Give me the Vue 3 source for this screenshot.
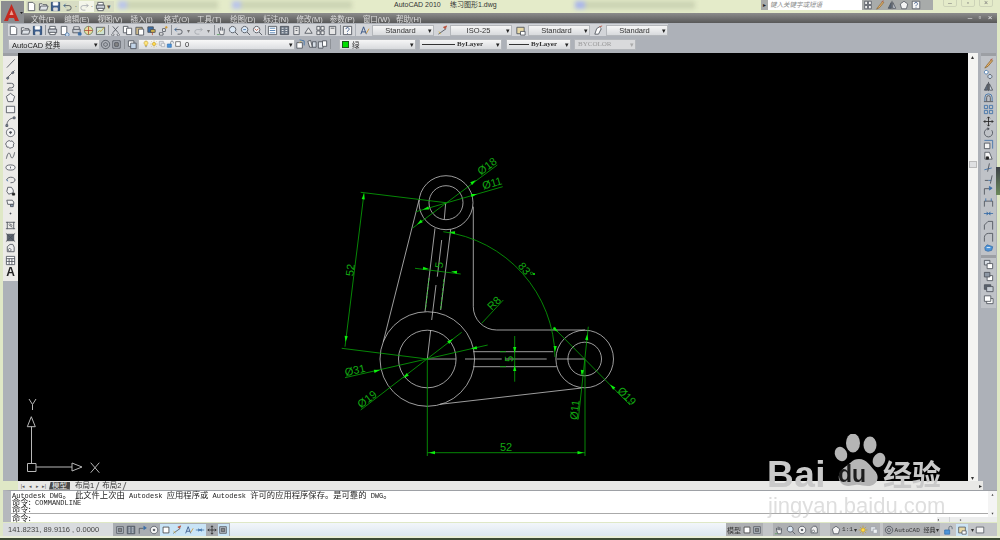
<script setup>
import { h } from 'vue'

const K = '#4a4f58'
const B = '#3a6ea8'
const Y = '#d9b94a'
const G = '#4f9a55'
const R = '#b8503c'

// 12x12 toolbar glyphs: [path, stroke, fill]
const icons = {
  new: [['M2.5 1.5h5l2 2v7h-7z', K, '#fff']],
  open: [['M1.5 10V3h3l1 1h4v1.5', K, '#f2f2f2'], ['M1.5 10l1.5-4.5h8L9.5 10z', K, '#dfe3e8']],
  save: [['M1.5 1.5h9v9h-9z', '#27456e', '#3e5f8e'], ['M3.5 1.5h5v3h-5z', '#fff', '#fff'], ['M4 7.5h4v3H4z', '#ddd', '#ddd']],
  print: [['M3 1.5h6v3H3z', K, '#fff'], ['M1.5 4.5h9v4h-9z', K, '#c9ced6'], ['M3 8h6v2.5H3z', K, '#fff']],
  preview: [['M2.5 1.5h6v9h-6z', K, '#fff'], ['M9 8.5a2 2 0 1 1-.1 0', B, '#cfe0f2']],
  publish: [['M2 4.5h8v4H2z', K, '#c9ced6'], ['M3 2h6v2.5H3z', K, '#fff'], ['M8 8.5h3v2.5H8z', B, B]],
  dwf: [['M6 1.5a4.5 4.5 0 1 0 .1 0', '#5a7d4f', '#e8dca0'], ['M6 1.5v9M1.5 6h9', R, 'none']],
  mark: [['M1.5 2.5h9v8h-9z', K, '#cfe3d0'], ['M3 8l2-2 1.5 1L10 2.5', '#c9a030', 'none']],
  cut: [['M3 1.5l6 7M9 1.5l-6 7', K, 'none'], ['M3 9.5a1.2 1.2 0 1 0 .1 0M9 9.5a1.2 1.2 0 1 0 .1 0', K, '#fff']],
  copy: [['M1.5 1.5h5v7h-5z', K, '#fff'], ['M5 3.5h5.5v7H5z', K, '#fff']],
  paste: [['M2 2.5h7v8H2z', K, '#cdb98a'], ['M5 4.5h5.5v6.5H5z', K, '#fff']],
  match: [['M2 2h6v6H2z', K, B], ['M5 5h5v3H5z', K, Y], ['M7 8v3', R, 'none']],
  block: [['M1.5 8.5h4v2.5h-4z', K, '#fff'], ['M5 4h3v3H5z', K, '#fff'], ['M9 1v3M7.5 2.5h3', '#d09020', 'none']],
  undo: [['M2 5h5.5a2.5 2.5 0 0 1 0 5H5', K, 'none'], ['M4 3L2 5l2 2', B, 'none']],
  redo: [['M10 5H4.5a2.5 2.5 0 0 0 0 5H7', '#a4a8ae', 'none'], ['M8 3l2 2-2 2', '#a4a8ae', 'none']],
  pan: [['M3 6V3.5M5 6V2M7 6V2.5M9 7V4M3 6l1.5 4.5h4L9 7', K, '#eee'], ['M1 10.5h3', G, 'none']],
  zoom: [['M5 1.5a3.5 3.5 0 1 0 .1 0', K, '#dbe8f5'], ['M7.5 7.5l3.5 3.5', K, 'none']],
  zoomw: [['M5 1.5a3.5 3.5 0 1 0 .1 0', K, '#dbe8f5'], ['M3.5 5h3', B, 'none'], ['M7.5 7.5l3.5 3.5', K, 'none']],
  zoomp: [['M5 1.5a3.5 3.5 0 1 0 .1 0', K, '#f0f3f6'], ['M3 4l2 2 2-2', R, 'none'], ['M7.5 7.5l3.5 3.5', K, 'none']],
  props: [['M1.5 1.5h9v9h-9z', K, '#fff'], ['M3 3.5h6M3 6h6M3 8.5h6', B, 'none']],
  center: [['M1.5 1.5h9v9h-9z', K, '#6d7886'], ['M3 3.5h2M7 3.5h2M3 6h2M7 6h2M3 8.5h2M7 8.5h2', '#fff', 'none']],
  palette: [['M3 1.5h6v9H3z', K, '#e6e6e6'], ['M5 3.5h2M5 6h2', K, 'none']],
  sheet: [['M2 9l4-6 4 6z', K, '#e6e6e6']],
  mkup: [['M2 1.5h3.5v4H2zM6.5 1.5H10v4H6.5zM2 6.5h3.5v4H2zM6.5 6.5H10v4H6.5z', K, '#eee']],
  calc: [['M2.5 1.5h7v9h-7z', K, '#e6e6e6'], ['M4 3.5h4', K, 'none']],
  help: [['M1.5 1.5h9v9h-9z', K, '#f6f6f6'], ['M4.3 4.5a1.7 1.7 0 1 1 2.5 1.5L6 6.8v.7M6 8.8v.8', '#26457a', 'none']],
  txt: [['M2 10L5 2l3 8M3 7.5h4', '#26457a', 'none'], ['M8 9l3-5', '#d09020', 'none']],
  dim: [['M1.5 10L10 4', K, 'none'], ['M7 2.5L10.5 1 9 4z', R, R], ['M2 7l2 3', Y, 'none']],
  tbl: [['M2 2.5h8v7H2z', K, '#e8d9a6'], ['M6 7h5v4H6z', K, '#fff']],
  mld: [['M2 10l2-6 3-2 2 2-3 6z', K, '#fff'], ['M7 2l3-1', R, 'none']],
  workspace: [['M6 1.5a4.5 4.5 0 1 0 .1 0', K, 'none'], ['M6 4a2 2 0 1 0 .1 0', K, 'none']],
  save2: [['M2 2h8v8H2z', K, '#bcc2ca'], ['M4 4h4v4H4z', K, '#888']],
  layer: [['M1.5 2h6v6h-6z', K, '#fff'], ['M4 4.5h6v6H4z', K, '#c2d4e8']],
  bulb: [['M6 1.5a3 3 0 0 0-1.5 5.5v1.5h3V7A3 3 0 0 0 6 1.5z', '#c09a20', '#ffe680'], ['M5 10h2', K, 'none']],
  sun: [['M6 3.5a2.5 2.5 0 1 0 .1 0', '#c09a20', '#ffd84a'], ['M6 .8v1.4M6 9.8v1.4M.8 6h1.4M9.8 6h1.4M2.3 2.3l1 1M8.7 8.7l1 1M9.7 2.3l-1 1M3.3 8.7l-1 1', '#c09a20', 'none']],
  faded: [['M2 2h6v6H2z', '#9aa0a8', '#dfe3e8'], ['M5 5h5v5H5z', '#9aa0a8', '#eef0f2']],
  lock: [['M2 6h6v5H2z', '#2f6eb0', '#4d94d8'], ['M7 6V3.5a2 2 0 0 1 4 0V5', '#54606e', 'none']],
  box: [['M2.5 2.5h7v7h-7z', '#333', '#fff']],
  layprev: [['M2 4h6v6H2z', K, '#fff'], ['M5 1l5 1v5', B, 'none'], ['M7 2L5 4', Y, 'none']],
  layiso: [['M2 2.5l3-1 2 7.5H4z', K, '#eee'], ['M7 3h4v6H7z', K, '#d6dde6']],
  layun: [['M1.5 3h5v7h-5z', K, '#e0e4ea'], ['M6 2h4.5v6H6z', K, '#fff']],
  line: [['M2 10.5L10.5 1.5', K, 'none']],
  xline: [['M1.5 10.5l9-9', K, 'none'], ['M3 9a1 1 0 1 0 .1 0M8.5 3a1 1 0 1 0 .1 0', K, '#8fa0b8']],
  pline: [['M2 2.5h5a2.5 2.5 0 0 1 0 5H4.5L3 10h6', K, 'none']],
  poly: [['M6 1.5l4.5 3.3-1.7 5.7H3.2L1.5 4.8z', K, '#f4f4f4']],
  rect: [['M1.5 2.5h9v7h-9z', K, '#f4f4f4']],
  arc: [['M2 10.5C2 5.5 5 2.5 10 2', K, 'none'], ['M1 9.5h2v2H1zM9 1h2v2H9z', K, '#8fa0b8']],
  circle: [['M6 1.5a4.5 4.5 0 1 0 .1 0', K, '#f4f4f4'], ['M6 5a1 1 0 1 0 .1 0', K, K]],
  cloud: [['M3 2.5a2 2 0 0 1 3 0 2 2 0 0 1 3 1 2 2 0 0 1 0 3 2 2 0 0 1-2 3 2 2 0 0 1-3-.5 2 2 0 0 1-2.5-2 2 2 0 0 1 0-3 2 2 0 0 1 1.5-1.5z', K, '#f4f4f4']],
  spline: [['M1.5 9.5C3 2 5 2 6 6s3 4 4.5-3.5', K, 'none']],
  ellipse: [['M1 6a5 2.8 0 1 0 10 0a5 2.8 0 1 0-10 0', K, '#f4f4f4'], ['M6 5v2', K, 'none']],
  earc: [['M2 7a4.5 3 0 1 1 4 2.5', K, 'none'], ['M2 6l1 2', B, 'none']],
  insert: [['M3 2.5h4l2 3v3l-5 1.5-2-3z', K, '#f4f4f4'], ['M8 9h2.5v2H8z', '#222', '#222']],
  mkblock: [['M2 3.5h6l1.5 2V8H3z', K, '#f4f4f4'], ['M6 8h3v2.5H6z', K, '#8fa0b8']],
  point: [['M5.5 5.5h1v1h-1z', K, K]],
  hatch: [['M2.5 2.5h7v7h-7z', K, 'none'], ['M1 2.5h2M9 2.5h2M1 9.5h2M9 9.5h2M4 5l4 3M5 4l3 2', K, 'none']],
  grad: [['M2.5 2.5h7v7h-7z', K, '#5c6470'], ['M1 1.5l10 9M11 1.5l-10 9', K, 'none']],
  region: [['M2.5 4l3-2.5h3l1.5 3v5H2.5z', K, '#eee'], ['M5 6a1.5 1.5 0 1 0 .1 0', K, '#fff']],
  table: [['M1.5 1.5h9v9h-9z', K, '#fff'], ['M1.5 4h9M1.5 7h9M4.5 4v6.5M7.5 4v6.5', K, 'none']],
  erase: [['M2 11l2-3 5-6 1.5 1-5 6z', '#8a6a30', '#e8b070'], ['M8 2l2.5-1', R, 'none']],
  copyo: [['M3.5 1.5a2 2 0 1 0 .1 0', B, '#fff'], ['M7.5 6a2.2 2.2 0 1 0 .1 0', K, '#cfe0f2']],
  mirror: [['M6 1v10', K, 'none'], ['M5 3L1.5 10H5z', K, '#5c6a7c'], ['M7 3l3.5 7H7z', K, '#cfd6e0']],
  offset: [['M2 10V6a4 4 0 0 1 8 0v4', B, 'none'], ['M1 10.5h10', K, 'none'], ['M4 10V6a2 2 0 0 1 4 0v4', K, 'none']],
  array: [['M1.5 1.5H5V5H1.5zM7 1.5h3.5V5H7zM1.5 7H5v3.5H1.5zM7 7h3.5v3.5H7z', B, 'none']],
  move: [['M6 1v10M1 6h10M4.5 2.5L6 1l1.5 1.5M4.5 9.5L6 11l1.5-1.5M2.5 4.5L1 6l1.5 1.5M9.5 4.5L11 6 9.5 7.5', '#222', 'none']],
  rotate: [['M9.5 3.5a4.5 4.5 0 1 1-3.5-1.7', K, 'none'], ['M5 .8L6.8 2 5 3.2', K, K]],
  scale: [['M1.5 4.5h6v6h-6z', K, '#f4f4f4'], ['M1.5 1.5h9v9', B, 'none']],
  stretch: [['M2 2.5h5l3 7.5H2z', K, '#f4f4f4'], ['M3.5 7.5H6V10H3.5z', '#222', '#222']],
  trim: [['M1.5 8.5l8-2', B, 'none'], ['M7 1.5l-2 9', K, 'none']],
  extend: [['M2 7h4', K, 'none'], ['M6 7h3', B, 'none'], ['M10 1.5l-2 9', K, 'none']],
  brk: [['M1.5 10.5V4h5', K, 'none'], ['M7 1.5l3 2-3 2z', B, B]],
  brk2: [['M1.5 10.5v-6h9v6', K, 'none'], ['M3 1.5v3M9 1.5v3', B, 'none']],
  join: [['M1 6h4M7 6h4', B, 'none'], ['M4 4.5L6 6 4 7.5M8 4.5L6 6l2 1.5', B, B]],
  chamfer: [['M1.5 10.5v-5l4-4h5v9', K, 'none']],
  fillet: [['M1.5 10.5V6A4.5 4.5 0 0 1 6 1.5h4.5v9', K, 'none']],
  explode: [['M2 5l2.5-3 3 1 3 1-1 4-4 1-3-1z', B, '#4d94d8'], ['M4 5h4', '#fff', 'none']],
  front: [['M1.5 1.5h6v5h-6z', K, '#d8dde4'], ['M4.5 5h6v5.5h-6z', K, '#fff']],
  back: [['M4.5 5h6v5.5h-6z', K, '#fff'], ['M1.5 1.5h6v5h-6z', K, '#8d97a4']],
  above: [['M1.5 3h7v5h-7z', K, '#5c6470'], ['M4 5h7v5.5H4z', K, '#c8ced6']],
  under: [['M4 5h7v5.5H4z', K, '#fff'], ['M1.5 2h7v6h-7z', K, '#fff']],
}

const Ico = (props) =>
  h('svg', { class: 'ico', viewBox: '0 0 12 12' },
    icons[props.n].map((p, i) => h('path', { key: i, d: p[0], stroke: p[1], fill: p[2], 'stroke-width': 0.9 })))
Ico.props = ['n']

const menus = ['文件(F)', '编辑(E)', '视图(V)', '插入(I)', '格式(O)', '工具(T)', '绘图(D)', '标注(N)', '修改(M)', '参数(P)', '窗口(W)', '帮助(H)']

const stdA = ['new', 'open', 'save']
const stdB = ['print', 'preview', 'publish', 'dwf', 'mark']
const stdC = ['cut', 'copy', 'paste', 'match', 'block']
const stdD = ['pan', 'zoom', 'zoomw', 'zoomp']
const stdE = ['props', 'center', 'palette', 'sheet', 'mkup', 'calc']

const styleCombos = [
  { icon: 'txt', label: 'Standard' },
  { icon: 'dim', label: 'ISO-25' },
  { icon: 'tbl', label: 'Standard' },
  { icon: 'mld', label: 'Standard' },
]

const leftTools = ['line', 'xline', 'pline', 'poly', 'rect', 'arc', 'circle', 'cloud', 'spline', 'ellipse', 'earc', 'insert', 'mkblock', 'point', 'hatch', 'grad', 'region', 'table']
const rightTools = ['erase', 'copyo', 'mirror', 'offset', 'array', 'move', 'rotate', 'scale', 'stretch', 'trim', 'extend', 'brk', 'brk2', 'join', 'chamfer', 'fillet', 'explode']
const orderTools = ['front', 'back', 'above', 'under']
const statusBtns = [
  { n: 'save2' }, { n: 'center' }, { n: 'brk' }, { n: 'circle' }, { n: 'box', on: true },
  { n: 'dim', on: true }, { n: 'txt', on: true }, { n: 'join', on: true }, { n: 'move' }, { n: 'save2', on: true },
]

// outline of the part
const white = [
  'M419 200L383.3 341.7',
  'M473.3 206.7V306.7A23.3 23.3 0 0 0 496.7 330H585',
  'M440 404.3L581.7 388',
  'M435 228.3L425 311.7',
  'M450.7 229.3L440.7 310',
  'M445.7 203L444.3 219M441.7 240L437.3 276.7M436 285L431.7 320M430.7 330L427.3 359',
  'M473.3 351.7H553.3M473.3 366.7H556.7',
  'M427.3 359H456M465 359H501.7M505 359H546.7M556.7 359H584.7',
]
const circles = [
  [446, 202.7, 27], [446, 202.7, 17],
  [427.3, 359, 47.3], [427.3, 359, 28.8],
  [584.7, 359, 28.8], [584.7, 359, 16.8],
]
const green = [
  'M360.7 192.3L446 202.7',
  'M364 193.3L345 346.7',
  'M341.7 348.3L427.3 359',
  'M412.7 228L497.3 165',
  'M416 211.7L502.7 186.7',
  'M443.3 231.7A128 128 0 0 1 555 357',
  'M481.7 323.3L503.3 300',
  'M415 268.3L460.7 274',
  'M345 377.7L487.7 345',
  'M360.7 410L461.7 332.3',
  'M514.7 336V381.7',
  'M553.3 327.3L630 405',
  'M588.3 326.7L578.3 419.3',
  'M427.3 359V456M585 359V456M427.3 452.7H585',
]
// tip x, tip y, direction in degrees
const arrows = [
  [364, 193.3, -83], [345.5, 342, 97],
  [476, 180, -37], [417, 224.5, 143],
  [477, 194, -16], [423, 209.5, 164],
  [449, 232, 187], [555, 352, 92],
  [429, 269, 7], [451, 271.5, 187],
  [380, 370, -13], [471, 349, 167],
  [403, 378, 143], [453, 339, -37],
  [514.7, 353, 90], [514.7, 365, -90],
  [558, 332, 45], [610, 384.5, -135],
  [587.3, 334, -84], [581.7, 376, 96],
  [429, 452.7, 180], [583.5, 452.7, 0],
]
const labels = [
  { t: '52', x: 350, y: 270, r: -83 },
  { t: 'Ø18', x: 487, y: 166, r: -37 },
  { t: 'Ø11', x: 492, y: 183, r: -16 },
  { t: '83°', x: 526, y: 270, r: 50 },
  { t: 'R8', x: 494, y: 303, r: -45 },
  { t: '5', x: 439, y: 265, r: -83 },
  { t: 'Ø31', x: 355, y: 370, r: -13 },
  { t: 'Ø19', x: 367, y: 399, r: -37 },
  { t: '5', x: 509.3, y: 359, r: -90 },
  { t: 'Ø19', x: 627, y: 396, r: 45 },
  { t: 'Ø11', x: 574.5, y: 410, r: -84 },
  { t: '52', x: 506, y: 447, r: 0 },
]
</script>

<template>
  <div class="app">
    <!-- title bar -->
    <div class="titlebar">
      <div class="logo">
        <svg viewBox="0 0 23 22" width="23" height="22">
          <path d="M0 0h23v22H0z" fill="#8b8d90" />
          <path d="M3 20L10.5 3 18 20h-4l-1-3H8l-1 3z" fill="#c42a20" />
          <path d="M8.5 14L10.5 9l2 5z" fill="#f0a090" />
          <path d="M19 11h3l-1.5 2z" fill="#222" />
        </svg>
      </div>
      <div class="quick">
        <Ico n="new" /><Ico n="open" /><Ico n="save" /><Ico n="undo" /><span class="dot">·</span>
        <span class="redo-slot"><Ico n="redo" /><span class="dot">·</span></span><Ico n="print" /><span class="dot">▾</span>
      </div>
      <div class="blur-tab t1"></div>
      <div class="blur-tab t2"></div>
      <div class="app-title">AutoCAD 2010</div>
      <div class="doc-title">练习图形1.dwg</div>
      <div class="blur-tab t3"></div>
      <div class="search">
        <span class="search-arrow">▸</span>
        <span class="search-box">键入关键字或短语</span>
        <span class="search-icons"><Ico n="mkup" /><Ico n="erase" /><Ico n="mirror" /><Ico n="poly" /><Ico n="help" /></span>
      </div>
      <div class="winbtns"><span>–</span><span>▫</span><span>×</span></div>
    </div>

    <!-- menu bar -->
    <div class="menubar">
      <span v-for="m in menus" :key="m" class="menu-item">{{ m }}</span>
      <div class="docbtns"><span>–</span><span>▫</span><span>×</span></div>
    </div>

    <!-- docked toolbars -->
    <div class="tools">
      <div class="row row1">
        <div class="strip">
          <Ico v-for="n in stdA" :key="n" :n="n" /><i class="sep"></i>
          <Ico v-for="n in stdB" :key="n" :n="n" /><i class="sep"></i>
          <Ico v-for="n in stdC" :key="n" :n="n" /><i class="sep"></i>
          <Ico n="undo" /><span class="drop">▾</span><Ico n="redo" /><span class="drop">▾</span><i class="sep"></i>
          <Ico v-for="n in stdD" :key="n" :n="n" /><i class="sep"></i>
          <Ico v-for="n in stdE" :key="n" :n="n" /><i class="sep"></i>
          <Ico n="help" />
        </div>
        <div class="strip styles">
          <template v-for="(c, i) in styleCombos" :key="i">
            <Ico :n="c.icon" />
            <div class="combo style-combo"><span class="combo-text center">{{ c.label }}</span><b>▾</b></div>
          </template>
        </div>
      </div>
      <div class="row row2">
        <div class="combo ws"><span class="combo-text">AutoCAD 经典</span><b>▾</b></div>
        <Ico n="workspace" /><Ico n="save2" /><i class="sep"></i>
        <Ico n="layer" />
        <div class="combo layers">
          <Ico n="bulb" /><Ico n="sun" /><Ico n="faded" /><Ico n="lock" /><Ico n="box" />
          <span class="combo-text">0</span><b>▾</b>
        </div>
        <Ico n="layprev" /><Ico n="layiso" /><Ico n="layun" /><i class="sep"></i>
        <div class="combo color"><i class="swatch"></i><span class="combo-text">绿</span><b>▾</b></div>
        <div class="combo ltype"><i class="lt lt-long"></i><span class="combo-text bylayer">ByLayer</span><b>▾</b></div>
        <div class="combo lweight"><i class="lt lt-short"></i><span class="combo-text bylayer">ByLayer</span><b>▾</b></div>
        <div class="combo plot"><span class="combo-text bycolor">BYCOLOR</span><b>▾</b></div>
      </div>
    </div>

    <!-- drawing area with side toolbars -->
    <div class="main">
      <div class="edge"></div>
      <div class="side-left">
        <div class="vbar">
          <i class="grip"></i>
          <Ico v-for="n in leftTools" :key="n" :n="n" />
          <span class="a-tool">A</span>
        </div>
      </div>
      <svg class="canvas" viewBox="18 53 950 428" width="950" height="428">
        <rect x="18" y="53" width="950" height="428" fill="#000" />
        <g fill="none" stroke="#c4c4c4" stroke-width="0.8">
          <circle v-for="(c, i) in circles" :key="i" :cx="c[0]" :cy="c[1]" :r="c[2]" />
          <path v-for="(d, i) in white" :key="i" :d="d" />
        </g>
        <g fill="none" stroke="#07a807" stroke-width="0.8">
          <path v-for="(d, i) in green" :key="i" :d="d" />
          <path d="M429 278L425.5 310M444 279L440.5 310" stroke-dasharray="3 1.5" stroke="#2ccf2c" />
          <path d="M500 351.7H535M500 366.7H535" stroke-dasharray="6 30" />
        </g>
        <path v-for="(a, i) in arrows" :key="i" d="M0 0L-6 -1.6L-6 1.6Z" fill="#0cf00c"
          :transform="`translate(${a[0]} ${a[1]}) rotate(${a[2]})`" />
        <text v-for="(l, i) in labels" :key="i" class="dim-text" text-anchor="middle" dominant-baseline="central"
          :transform="`translate(${l.x} ${l.y}) rotate(${l.r})`">{{ l.t }}</text>
        <circle cx="534" cy="274" r="1" fill="#0cf00c" />
        <!-- UCS icon -->
        <g fill="none" stroke="#b8b8b8" stroke-width="1">
          <path d="M27.5 463.5h8.5v8h-8.5zM31.5 463.5V426.5M36 467H72" />
          <path d="M31.3 416.7L27.3 426.7H35.3zM72 463L82 467L72 471z" />
          <path d="M29 399L32.5 404.5L36 399M32.5 404.5V410M90.7 462.7L99.3 472.7M99.3 462.7L90.7 472.7" />
        </g>
      </svg>
      <div class="vscroll"><span class="up">▴</span><i class="thumb"></i><span class="down">▾</span></div>
      <div class="side-right">
        <div class="vbar rbar">
          <i class="grip"></i>
          <Ico v-for="n in rightTools" :key="n" :n="n" />
          <i class="grip"></i>
          <Ico v-for="n in orderTools" :key="n" :n="n" />
        </div>
        <i class="side-thumb"></i>
      </div>
    </div>

    <!-- layout tabs -->
    <div class="tabrow">
      <div class="tab-nav"><span>|◂</span><span>◂</span><span>▸</span><span>▸|</span></div>
      <span class="tab active">模型</span>
      <span class="tab">布局1</span>
      <span class="tab">布局2</span>
      <span class="tab-arrow">▸</span>
    </div>

    <!-- command window -->
    <div class="cmd">
      <div class="cmd-log">
        <div>Autodesk DWG<span class="zh">。</span>  <span class="zh">此文件上次由</span> Autodesk <span class="zh">应用程序或</span> Autodesk <span class="zh">许可的应用程序保存。是可靠的</span> DWG<span class="zh">。</span></div>
        <div><span class="zh">命令:</span> COMMANDLINE</div>
        <div><span class="zh">命令:</span></div>
      </div>
      <div class="cmd-input"><span class="zh">命令:</span></div>
      <div class="cmd-scroll"><span>▴</span><span>▾</span></div>
      <div class="cmd-h"><span>◂</span><i></i><span>▸</span></div>
    </div>

    <!-- status bar -->
    <div class="status">
      <div class="coords">141.8231, 89.9116 , 0.0000</div>
      <div class="btns">
        <span v-for="(b, i) in statusBtns" :key="i" class="st-btn" :class="{ on: b.on }"><Ico :n="b.n" /></span>
      </div>
      <div class="status-fill"></div>
      <div class="status-right">
        <div class="st-group g1"><span class="model">模型</span><Ico n="box" /><Ico n="save2" /></div>
        <div class="st-group g2"><Ico n="pan" /><Ico n="zoom" /><Ico n="circle" /><Ico n="region" /></div>
        <div class="st-group g3"><Ico n="poly" /><span class="scale">1:1</span><span class="mini">▾</span><Ico n="sun" /><Ico n="faded" /></div>
        <div class="st-group g4"><Ico n="workspace" /><span class="ws-label">AutoCAD 经典</span><span class="mini">▾</span></div>
        <Ico n="lock" /><span class="tray"><Ico n="tbl" /></span><span class="mini">▾</span><Ico n="rect" />
      </div>
    </div>
    <div class="foot"></div>

    <!-- site watermark -->
    <div class="watermark">
      <svg class="paw" viewBox="0 0 60 60" width="60" height="60">
        <ellipse cx="27" cy="9" rx="7" ry="9.5" />
        <ellipse cx="44" cy="11" rx="6.5" ry="8.5" />
        <ellipse cx="15" cy="20" rx="6" ry="7.5" transform="rotate(-25 15 20)" />
        <ellipse cx="53" cy="26" rx="6" ry="7.5" transform="rotate(25 53 26)" />
        <path d="M33 25c8 0 11 7 16 12 6 7 1 15-7 15-5 0-9-2-13-1-5 1-10 2-14-2-5-6-1-12 4-16 5-3 7-8 14-8z" />
      </svg>
      <span class="wm-bai">Bai</span>
      <span class="wm-du">du</span>
      <span class="wm-jy">经验</span>
      <span class="wm-url">jingyan.baidu.com</span>
    </div>
  </div>
</template>

<style>
html, body { margin: 0; background: #dfe8c6; }
</style>

<style scoped>
.app {
  position: relative;
  width: 1000px;
  height: 540px;
  overflow: hidden;
  display: flex;
  flex-direction: column;
  background: #dfe8c6;
  font-family: "Liberation Sans", "Noto Sans CJK SC", sans-serif;
  font-size: 8px;
  color: #333;
}
.ico { width: 11px; height: 11px; flex: none; display: block; }

/* title */
.titlebar {
  position: relative;
  z-index: 2;
  height: 13px;
  flex: none;
  background: #e4ebc9;
  filter: blur(0.4px);
}
.logo { position: absolute; left: 1px; top: 1px; width: 23px; height: 22px; overflow: hidden; }
.quick { position: absolute; left: 26px; top: 1px; height: 11px; padding-right: 3px; display: flex; gap: 1px; align-items: center; background: #d8ddc4; }
.dot { font-size: 7px; color: #555; width: 4px; text-align: center; flex: none; }
.redo-slot { display: flex; background: #f4f6ea; align-items: center; height: 11px; }
.blur-tab { position: absolute; top: 1px; height: 8px; background: linear-gradient(90deg, #b9c4ea 0 9px, #ccd4b4 9px); filter: blur(2px); }
.t1 { left: 118px; width: 100px; }
.t2 { left: 232px; width: 120px; }
.t3 { left: 575px; width: 120px; background: linear-gradient(90deg, #aab6ea 0 10px, #ccd4b4 10px); }
.app-title { position: absolute; left: 394px; top: 0; font-size: 7px; line-height: 9px; }
.doc-title { position: absolute; left: 450px; top: 0; font-size: 7px; line-height: 9px; }
.search { position: absolute; left: 761px; top: 0; height: 10px; width: 172px; display: flex; background: #a8abaa; }
.search-arrow { width: 7px; font-size: 6px; color: #222; line-height: 10px; text-align: center; }
.search-box { width: 94px; background: #fff; color: #888; font-style: italic; font-size: 6.5px; line-height: 10px; padding-left: 2px; box-sizing: border-box; }
.search-icons { display: flex; gap: 2px; padding-left: 1px; }
.search-icons .ico { width: 10px; height: 10px; }
.winbtns, .docbtns { display: flex; gap: 2px; color: #eee; }
.winbtns { position: absolute; left: 943px; top: -2px; color: #777; gap: 4px; }
.winbtns span { width: 12px; height: 7px; line-height: 7px; border: 1px solid #cdd3b8; border-radius: 2px; text-align: center; font-size: 7px; }

/* menu */
.menubar {
  height: 10px;
  flex: none;
  display: flex;
  align-items: center;
  padding: 0 3px 0 28px;
  margin: 0 3px;
  background: linear-gradient(#8c8c8c, #585858);
  color: #dedede;
  filter: blur(0.3px);
}
.menu-item { width: 33.2px; flex: none; font-size: 7.5px; white-space: nowrap; }
.docbtns { margin-left: auto; }
.docbtns span { width: 8px; text-align: center; font-size: 8px; line-height: 8px; }

/* toolbars */
.tools {
  height: 30px;
  flex: none;
  margin: 0 3px;
  box-sizing: border-box;
  background: #adb1b8;
  padding: 1px 0 0 5px;
  filter: blur(0.35px);
}
.row { display: flex; align-items: center; height: 12.5px; margin-bottom: 1.5px; }
.strip { display: flex; align-items: center; gap: 1px; background: #d3d5d9; height: 12px; padding-right: 2px; }
.sep { width: 1px; height: 10px; background: #8e9298; margin: 0 0.5px; flex: none; }
.drop { font-size: 6px; color: #777; width: 7px; text-align: center; flex: none; }
.styles { margin-left: 1px; gap: 0; padding: 0; }
.styles .ico { margin: 0 2.5px; }
.combo {
  display: flex;
  align-items: center;
  height: 11px;
  box-sizing: border-box;
  background: linear-gradient(#f6f6f6, #d8dadd);
  border: 1px solid #b4b7bb;
  flex: none;
}
.combo b { margin-left: auto; font-size: 7px; color: #222; font-weight: 400; padding-right: 1px; line-height: 9px; }
.combo .ico { width: 8px; height: 8px; }
.combo-text { font-size: 7.5px; padding-left: 3px; white-space: nowrap; color: #333; }
.center { flex: 1; text-align: center; padding-left: 0; }
.style-combo { width: 62px; }
.row2 .sep { margin: 0 2px; }
.ws { width: 92px; background: linear-gradient(#f0f0f0, #d0d2d5); }
.ws .combo-text { color: #222; }
.layers { width: 157px; padding-left: 3px; background: linear-gradient(#f8f8f8, #dcdee1); }
.color { width: 77px; margin-left: 6px; }
.swatch { width: 7px; height: 7px; background: #00e000; border: 1px solid #1a5c1a; box-sizing: border-box; margin-left: 2px; }
.ltype { width: 83px; margin-left: 3px; }
.lweight { width: 65px; margin-left: 4px; }
.plot { width: 62px; margin-left: 3px; background: #d9dadc; }
.lt { height: 1px; background: #333; margin-left: 2px; flex: none; }
.lt-long { width: 33px; }
.lt-short { width: 20px; }
.bylayer { font-family: "Liberation Serif", serif; font-weight: 700; font-size: 7px; padding-left: 2px; }
.bycolor { font-family: "Liberation Serif", serif; font-size: 7px; color: #9a9a9a; }
.plot b { color: #aaa; }

/* main */
.main { height: 428px; flex: none; display: flex; }
.edge { width: 3px; flex: none; }
.side-left { width: 15px; flex: none; background: #acb1b8; filter: blur(0.35px); }
.vbar {
  background: #ecebe8;
  display: flex;
  flex-direction: column;
  align-items: center;
  gap: 0.6px;
  padding-bottom: 3px;
}
.grip { display: block; width: 100%; height: 3px; background: #9c9fa4; margin-bottom: 1px; flex: none; }
.a-tool { font-size: 12px; font-weight: 700; line-height: 12px; color: #222; }
.canvas { display: block; flex: none; }
.vscroll {
  width: 10px;
  flex: none;
  background: #f4f4f2;
  position: relative;
  color: #333;
  font-size: 6px;
  filter: blur(0.3px);
}
.vscroll .up { position: absolute; top: 0; left: 3px; }
.vscroll .down { position: absolute; bottom: 0; left: 3px; }
.thumb { position: absolute; left: 1px; top: 108px; width: 8px; height: 7px; background: #dfe0e2; border: 1px solid #bbb; box-sizing: border-box; }
.side-right {
  position: relative;
  flex: 1;
  background: #adb1b8;
  padding-left: 3px;
  padding-right: 1px;
  box-sizing: border-box;
  border-right: 3px solid #dfe8c6;
  filter: blur(0.35px);
}
.rbar { background: #bfc2c7; }
.side-thumb { position: absolute; right: -3px; top: 114px; width: 4px; height: 28px; background: linear-gradient(#3c4046, #6c8a5c); }

/* tabs */
.tabrow {
  height: 9px;
  flex: none;
  margin: 0 3px 0 18px;
  background: #e8e8e6;
  display: flex;
  align-items: center;
  font-size: 7.5px;
  border-right: 14px solid #adb1b8;
  filter: blur(0.3px);
  position: relative;
}
.tab-nav { display: flex; width: 31px; padding-left: 2px; box-sizing: border-box; color: #555; font-size: 5px; gap: 1px; flex: none; }
.tab-nav span { width: 6px; text-align: center; }
.tab { position: relative; padding: 0 3px; margin-right: 2px; line-height: 8px; white-space: nowrap; }
.tab::after { content: ""; position: absolute; right: -1px; top: 0; height: 8px; width: 1px; background: #666; transform: skewX(-20deg); }
.tab.active { background: #4a4a4a; color: #eee; clip-path: polygon(8% 0, 100% 0, 100% 100%, 0 100%); }
.tab-arrow { position: absolute; right: 1px; font-size: 6px; }

/* command */
.cmd {
  position: relative;
  height: 32px;
  flex: none;
  margin: 0 3px;
  box-sizing: border-box;
  background: #fff;
  border-top: 1px solid #9da0a5;
  border-left: 8px solid #b5b8bd;
  font-family: "Liberation Mono", "Noto Sans CJK SC", monospace;
  font-size: 7px;
  color: #222;
  filter: blur(0.3px);
}
.cmd-log { height: 23px; padding-left: 1px; border-bottom: 1px solid #aaa; box-sizing: border-box; }
.cmd-log > div { height: 7px; line-height: 7px; white-space: pre; }
.zh { font-family: "Noto Sans CJK SC", sans-serif; font-size: 8.3px; line-height: 7px; }
.cmd-input { padding-left: 1px; line-height: 8px; height: 8px; }
.cmd-scroll { position: absolute; right: 0; top: 0; bottom: 5px; width: 9px; display: flex; flex-direction: column; justify-content: space-between; font-size: 5px; text-align: center; color: #444; background: #f4f4f4; }
.cmd-h { position: absolute; right: 0; bottom: 0; width: 60px; height: 5px; background: #eceded; display: flex; align-items: center; justify-content: flex-end; gap: 10px; font-size: 4px; padding-right: 35px; box-sizing: border-box; }
.cmd-h i { width: 7px; height: 5px; background: #d3d4d6; }

/* status */
.status {
  height: 13px;
  flex: none;
  margin: 1px 3px 0;
  display: flex;
  align-items: center;
  background: #e9eef3;
  filter: blur(0.3px);
}
.coords { width: 110px; height: 100%; padding-left: 5px; box-sizing: border-box; line-height: 13px; font-size: 7.5px; background: #d9dcdf; color: #444; flex: none; white-space: nowrap; }
.btns { display: flex; background: #a9adb2; height: 100%; align-items: center; padding: 0 1px; flex: none; }
.st-btn { width: 11.5px; height: 12px; display: flex; align-items: center; justify-content: center; }
.st-btn.on { background: #c9e4f6; }
.st-btn .ico { width: 10px; height: 10px; }
.status-fill { flex: 1; height: 100%; background: linear-gradient(#f2f6fa, #dde7ef); }
.status-right { width: 271px; height: 100%; flex: none; display: flex; align-items: center; background: #c3c5c8; box-sizing: border-box; gap: 1px; font-size: 7px; }
.status-right .ico { width: 10px; height: 10px; }
.st-group { display: flex; align-items: center; justify-content: space-between; height: 100%; background: #aeb0b3; padding: 0 1px; box-sizing: border-box; flex: none; }
.g1 { width: 37px; margin-right: 9px; }
.g2 { width: 47px; margin-right: 9px; }
.g3 { width: 50px; margin-right: 2px; }
.g4 { width: 57px; margin-right: 2px; }
.model { white-space: nowrap; width: 14px; font-size: 7px; flex: none; }
.scale, .ws-label { font-family: "Liberation Mono", "Noto Sans CJK SC", monospace; font-size: 6px; white-space: nowrap; }
.mini { font-size: 6px; flex: none; }
.tray { background: #cde4f4; padding: 1px; margin: 0 2px; flex: none; }
.foot { flex: 1; background: linear-gradient(#e9eed8 0 1.5px, #3c4a34 2.5px); }

/* watermark */
.watermark { position: absolute; left: 0; top: 0; width: 1000px; height: 540px; pointer-events: none; color: #c9c9c9; z-index: 5; }
.watermark span { position: absolute; line-height: 1; white-space: nowrap; }
.paw { position: absolute; left: 826px; top: 434px; fill: #b5b5b5; }
.wm-bai { left: 767px; top: 456px; font-size: 37px; font-weight: 700; font-family: "Liberation Sans", sans-serif; letter-spacing: 0.5px; }
.wm-du { left: 838px; top: 463px; font-size: 23px; font-weight: 700; color: #1c1c1c; font-family: "Liberation Sans", sans-serif; }
.wm-jy { left: 883px; top: 459px; font-size: 29px; font-family: "Noto Sans CJK SC", sans-serif; font-weight: 700; }
.wm-url { left: 768px; top: 495px; font-size: 22px; font-family: "Liberation Sans", sans-serif; color: rgba(200, 200, 200, 0.6); }

.dim-text { font-family: "Liberation Sans", sans-serif; font-size: 11px; fill: #12a812; }
</style>
